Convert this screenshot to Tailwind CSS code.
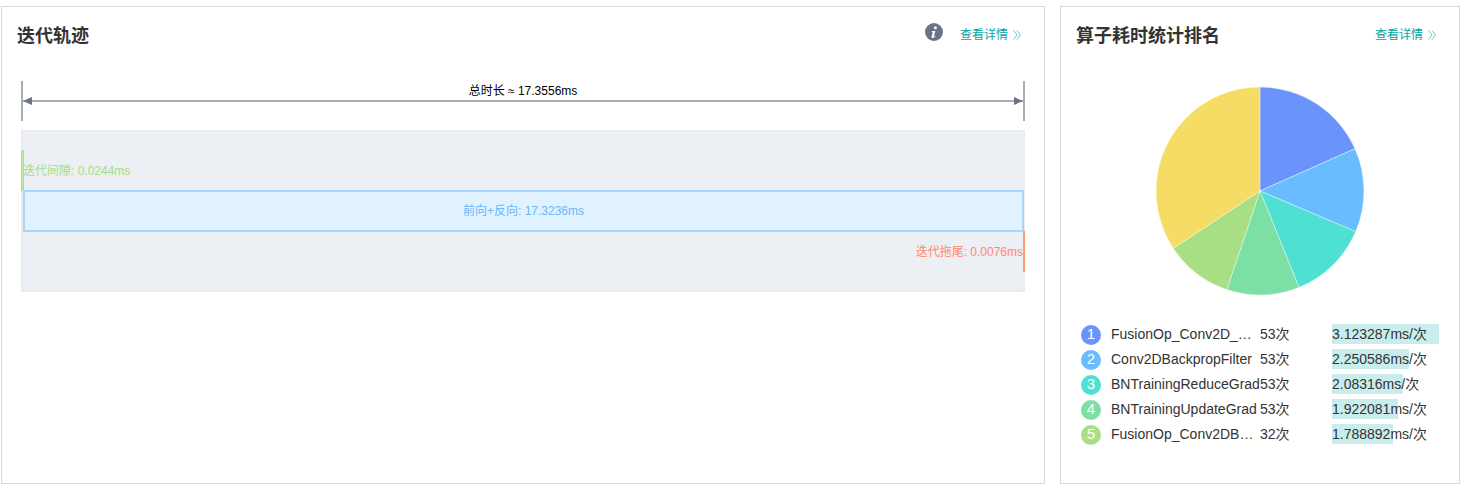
<!DOCTYPE html>
<html lang="zh-CN">
<head>
    <meta charset="UTF-8">
    <title>迭代轨迹</title>
    <script src="https://cdn.jsdelivr.net/npm/@tailwindcss/browser@4"></script>
</head>
<body class="bg-white overflow-hidden font-['Liberation_Sans','Noto_Sans_CJK_SC',sans-serif]">
    <div class="flex gap-[15px] pl-px pt-[6px] w-[1470px] h-[492px]">
        <!-- 迭代轨迹 -->
        <section class="w-[1044px] h-[478px] border border-[#d9d9d9] px-[19px]">
            <div class="flex items-center h-[55px] -ml-[4px] mr-[4px]">
                <h2 class="text-[18px] font-bold text-[#333] leading-[55px] mt-[3px]">迭代轨迹</h2>
                <svg class="ml-auto -mt-[5px] w-[18px] h-[18px]" viewBox="0 0 18 18">
                    <circle cx="9" cy="9" r="9" fill="#6b7386"/>
                    <circle cx="10.4" cy="4.7" r="1.5" fill="#fff"/>
                    <path d="M7 8h3.4l-1.6 5.2c0 .5.6.4 1.5-.4l.3.5C9.500 14.400 8.600 15 7.700 15c-1 0-1.400-.7-1.100-1.600l1.200-4.100-1 .0z" fill="#fff"/>
                </svg>
                <a class="ml-[17px] text-[12px] text-[#00a5a7]">查看详情</a>
                <svg class="ml-[5px] w-[8px] h-[10px]" viewBox="0 0 8 10" fill="none" stroke="#6cc5c9" stroke-width="1">
                    <path d="M.5.5 4 5 .5 9.500M4 .5 7.500 5 4 9.500"/>
                </svg>
            </div>

            <div class="relative h-[40px] mt-[19px] w-[1004px] border-x-[2px] border-[#a9adb8]">
                <div class="absolute left-0 right-0 top-[19px] h-[2px] bg-[#a9adb8]"></div>
                <svg class="absolute left-0 top-[16px] w-[9px] h-[8px]" viewBox="0 0 9 8"><path d="M0 4 9 0v8z" fill="#6b7386"/></svg>
                <svg class="absolute right-0 top-[16px] w-[9px] h-[8px]" viewBox="0 0 9 8"><path d="M9 4 0 0v8z" fill="#6b7386"/></svg>
                <div class="absolute inset-x-0 top-[1px] text-center text-[12px] leading-[18px] text-black">总时长 ≈ 17.3556ms</div>
            </div>

            <div class="mt-[9px] w-[1004px] h-[162px] bg-[#eceff4] border-[2px] border-[#e9ebee] py-[18px] text-[12px]">
                <div class="h-[41px] flex items-center border-l-[3px] border-[#b4e29b] -ml-[2px] text-[#a6dd84]"><span class="-ml-px">迭代间隙: 0.0244ms</span></div>
                <div class="h-[42px] -mt-px flex items-center justify-center bg-[#e0f1ff] border-[2px] border-[#a8d5fb] -mr-px text-[#69b8f8]">前向+反向: 17.3236ms</div>
                <div class="h-[41px] -mt-px flex items-center justify-end border-r-[2px] border-[#ff9c73] -mr-[2px] text-[#ff8a66]">迭代拖尾: 0.0076ms</div>
            </div>
        </section>

        <!-- 算子耗时统计排名 -->
        <section class="w-[400px] h-[478px] border border-[#d9d9d9] pl-[15px]">
            <div class="flex items-center h-[55px] pr-[23px]">
                <h2 class="text-[18px] font-bold text-[#333] leading-[55px] mt-[3px]">算子耗时统计排名</h2>
                <a class="ml-auto text-[12px] text-[#00a5a7]">查看详情</a>
                <svg class="ml-[5px] w-[8px] h-[10px]" viewBox="0 0 8 10" fill="none" stroke="#6cc5c9" stroke-width="1">
                    <path d="M.5.5 4 5 .5 9.500M4 .5 7.500 5 4 9.500"/>
                </svg>
            </div>

            <svg class="block ml-[79px] mt-[24px] w-[210px] h-[210px]" viewBox="1155 86 210 210">
                <g stroke="#fff" stroke-width=".4" stroke-linejoin="round">
                    <path d="M1260 191V87A104 104 0 0 1 1355 148.700Z" fill="#6b94fb"/>
                    <path d="M1260 191 1355 148.700A104 104 0 0 1 1355.700 231.600Z" fill="#69bcff"/>
                    <path d="M1260 191 1355.700 231.600A104 104 0 0 1 1299 287.400Z" fill="#4fe0d4"/>
                    <path d="M1260 191 1299 287.400A104 104 0 0 1 1226.800 289.600Z" fill="#7cdfa4"/>
                    <path d="M1260 191 1226.800 289.600A104 104 0 0 1 1173.300 248.400Z" fill="#a8de84"/>
                    <path d="M1260 191 1173.300 248.400A104 104 0 0 1 1260 87Z" fill="#f5dd65"/>
                </g>
            </svg>

            <ul class="mt-[26px] ml-[5px] text-[14px] text-[#333]">
                <li class="flex items-center h-[25px]">
                    <span class="w-[20px] h-[20px] rounded-full bg-[#6b94fb] text-white text-[15px] flex items-center justify-center">1</span>
                    <span class="ml-[10px] w-[149px] whitespace-nowrap">FusionOp_Conv2D_…</span>
                    <span class="w-[72px]">53次</span>
                    <span class="relative"><span class="absolute left-0 top-0 h-[20px] w-[107px] bg-[#c9eded]"></span><span class="relative">3.123287ms/次</span></span>
                </li>
                <li class="flex items-center h-[25px]">
                    <span class="w-[20px] h-[20px] rounded-full bg-[#69bcff] text-white text-[15px] flex items-center justify-center">2</span>
                    <span class="ml-[10px] w-[149px] whitespace-nowrap">Conv2DBackpropFilter</span>
                    <span class="w-[72px]">53次</span>
                    <span class="relative"><span class="absolute left-0 top-0 h-[20px] w-[77px] bg-[#c9eded]"></span><span class="relative">2.250586ms/次</span></span>
                </li>
                <li class="flex items-center h-[25px]">
                    <span class="w-[20px] h-[20px] rounded-full bg-[#4fe0d4] text-white text-[15px] flex items-center justify-center">3</span>
                    <span class="ml-[10px] w-[149px] whitespace-nowrap">BNTrainingReduceGrad</span>
                    <span class="w-[72px]">53次</span>
                    <span class="relative"><span class="absolute left-0 top-0 h-[20px] w-[71px] bg-[#c9eded]"></span><span class="relative">2.08316ms/次</span></span>
                </li>
                <li class="flex items-center h-[25px]">
                    <span class="w-[20px] h-[20px] rounded-full bg-[#7cdfa4] text-white text-[15px] flex items-center justify-center">4</span>
                    <span class="ml-[10px] w-[149px] whitespace-nowrap">BNTrainingUpdateGrad</span>
                    <span class="w-[72px]">53次</span>
                    <span class="relative"><span class="absolute left-0 top-0 h-[20px] w-[66px] bg-[#c9eded]"></span><span class="relative">1.922081ms/次</span></span>
                </li>
                <li class="flex items-center h-[25px]">
                    <span class="w-[20px] h-[20px] rounded-full bg-[#a8de84] text-white text-[15px] flex items-center justify-center">5</span>
                    <span class="ml-[10px] w-[149px] whitespace-nowrap">FusionOp_Conv2DB…</span>
                    <span class="w-[72px]">32次</span>
                    <span class="relative"><span class="absolute left-0 top-0 h-[20px] w-[61px] bg-[#c9eded]"></span><span class="relative">1.788892ms/次</span></span>
                </li>
            </ul>
        </section>
    </div>
</body>
</html>
